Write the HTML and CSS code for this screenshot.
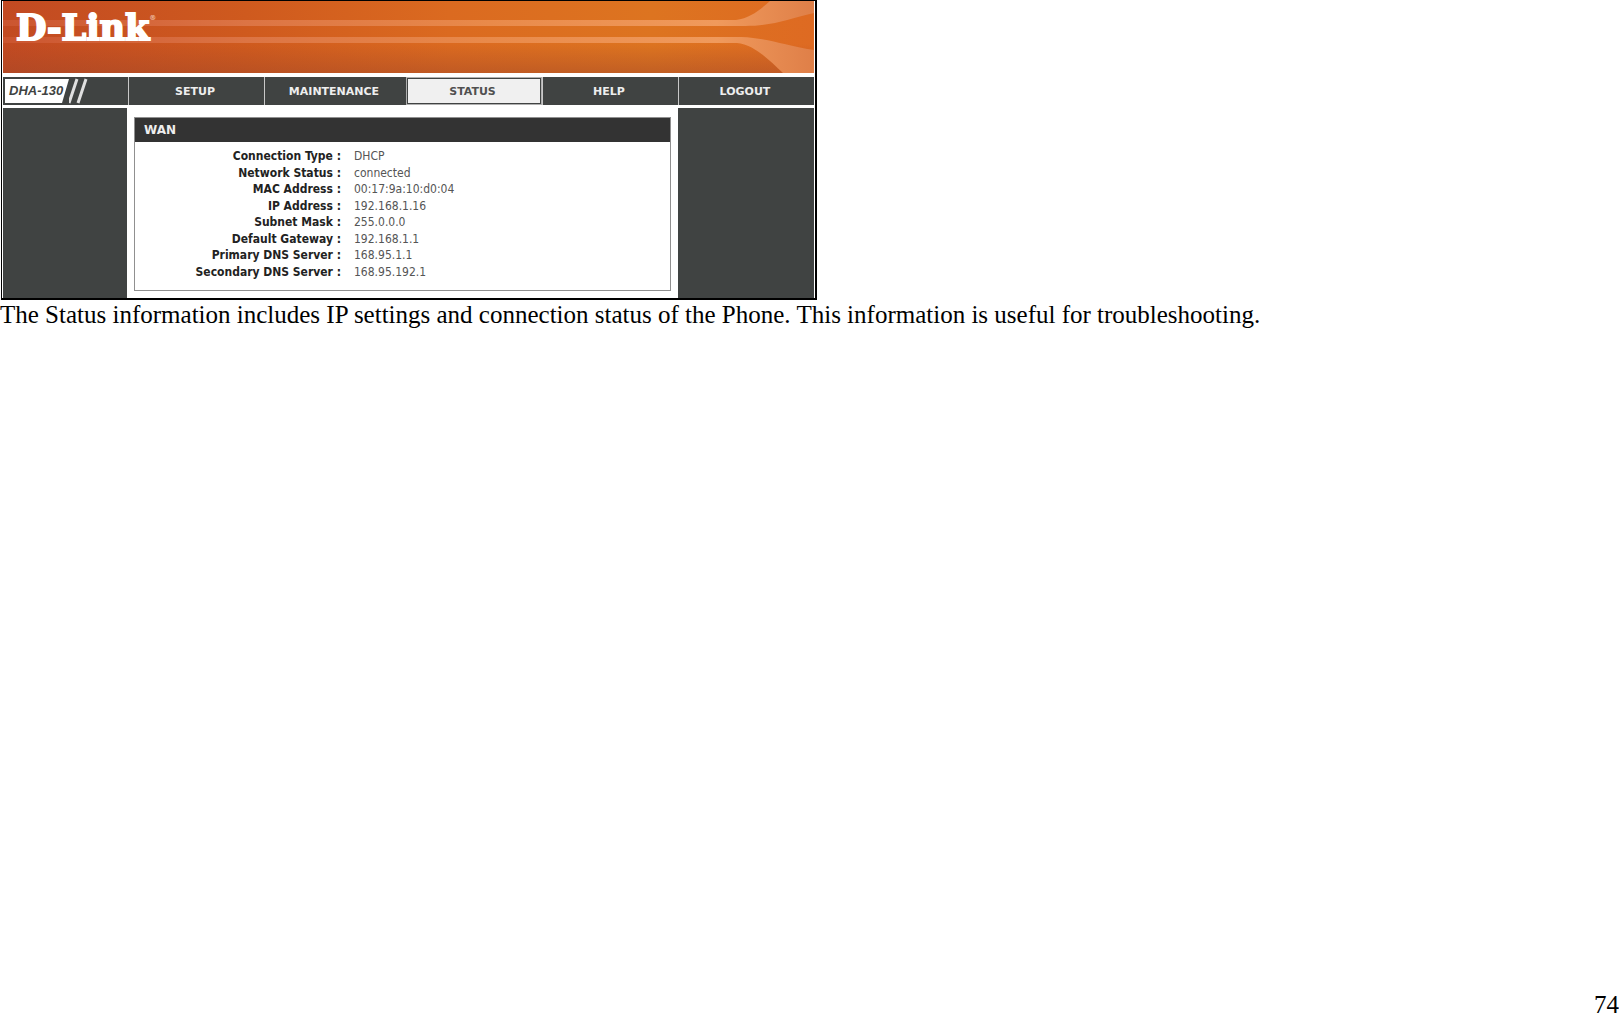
FILE: index.html
```html
<!DOCTYPE html>
<html lang="en">
<head>
  <meta charset="UTF-8">
  <meta name="viewport" content="width=device-width, initial-scale=1.0">
  <title>D-Link DHA-130 Status</title>
  <link rel="stylesheet" href="styles.css">
</head>
<body>

  <main>
    <div class="router">
      <header class="banner">
        <svg class="banner-art" viewBox="0 0 811 72" preserveAspectRatio="none" aria-hidden="true">
          <defs>
            <linearGradient id="streak" x1="0" y1="0" x2="811" y2="0" gradientUnits="userSpaceOnUse">
              <stop offset="0" stop-color="#cb5530"/>
              <stop offset="0.3" stop-color="#dc7444"/>
              <stop offset="0.6" stop-color="#e98a4a"/>
              <stop offset="0.88" stop-color="#f09a5c"/>
              <stop offset="1" stop-color="#df7f48"/>
            </linearGradient>
          </defs>
          <path fill="url(#streak)" d="M0 19H733C747 17 757 9 767 0H811V12C785 18 770 25 742 25H0z"/>
          <path fill="url(#streak)" d="M0 36H738C765 37 780 44 811 49V72H780C766 59 752 44 734 42H0z"/>
        </svg>
        <div class="logo">D-Link<sup>®</sup></div>
      </header>

      <nav class="menu">
        <div class="model">
          <span class="model-name">DHA-130</span>
          <svg class="slashes" width="24" height="28" viewBox="0 0 24 28" aria-hidden="true">
            <path d="M8 2L0 26M17 2L9 26" stroke="#e0e0e0" stroke-width="3" fill="none"/>
          </svg>
        </div>
        <a href="#">SETUP</a>
        <a href="#">MAINTENANCE</a>
        <a href="#" class="active">STATUS</a>
        <a href="#">HELP</a>
        <a href="#">LOGOUT</a>
      </nav>

      <div class="content">
        <div class="side"></div>
        <section class="box">
          <h2>WAN</h2>
          <table>
            <tr><th scope="row">Connection Type :</th><td>DHCP</td></tr>
            <tr><th scope="row">Network Status :</th><td>connected</td></tr>
            <tr><th scope="row">MAC Address :</th><td>00:17:9a:10:d0:04</td></tr>
            <tr><th scope="row">IP Address :</th><td>192.168.1.16</td></tr>
            <tr><th scope="row">Subnet Mask :</th><td>255.0.0.0</td></tr>
            <tr><th scope="row">Default Gateway :</th><td>192.168.1.1</td></tr>
            <tr><th scope="row">Primary DNS Server :</th><td>168.95.1.1</td></tr>
            <tr><th scope="row">Secondary DNS Server :</th><td>168.95.192.1</td></tr>
          </table>
        </section>
        <div class="side"></div>
      </div>
    </div>

    <p class="note">The Status information includes IP settings and connection status of the Phone. This information is useful for troubleshooting.</p>
  </main>

  <footer>74</footer>

</body>
</html>
```
FILE: styles.css
```css
* {
  box-sizing: border-box;
}
body {
  display: flex;
  flex-direction: column;
  min-height: 100vh;
  margin: 0;
  background-color: #fff;
  color: #000;
  font-family: "Liberation Serif", "Times New Roman", serif;
  font-size: 25px;
  overflow: hidden;
}
main {
  flex: 1;
}

/* Router page */
.router {
  max-width: 816px;
  margin-left: 1px;
  padding: 0 1px;
  border: solid #000;
  border-width: 1px 2px 2px 1px;
  font-family: "DejaVu Sans Condensed", "DejaVu Sans", sans-serif;
  font-size: 12px;
}
.banner {
  position: relative;
  height: 72px;
  padding: 5px 13px;
  background:
    linear-gradient(to bottom, rgba(160, 70, 40, 0) 60%, rgba(160, 70, 40, 0.45)),
    linear-gradient(to right, #c24a22, #cf5a1e 30%, #db6a20 55%, #dd7420 80%, #de6a22);
}
.banner-art {
  position: absolute;
  top: 0;
  left: 0;
  width: 100%;
  height: 100%;
}
.logo {
  position: relative;
  color: #fff;
  font-family: "DejaVu Serif", serif;
  font-size: 35px;
  font-weight: bold;
  line-height: 44px;
  -webkit-text-stroke: 2px #fff;
}
.logo sup {
  font-size: 7px;
  line-height: 1;
  vertical-align: 20px;
  -webkit-text-stroke: 0;
  color: #f0c0a8;
}

/* Menu */
.menu {
  display: grid;
  grid-template-columns: 125fr 136fr 142fr 136fr 136fr 136fr;
  height: 28px;
  margin-top: 4px;
  background-color: #404342;
}
.menu a {
  display: flex;
  align-items: center;
  justify-content: center;
  padding-right: 3px;
  border-left: 1px solid #c8c8c8;
  color: #eee;
  font-family: "DejaVu Sans", sans-serif;
  font-size: 11px;
  font-weight: bold;
  text-decoration: none;
}
.menu .active {
  border: 2px solid #404342;
  outline: 1px solid #b0b0b0;
  outline-offset: -1px;
  background-color: #f0f0f0;
  color: #505050;
}
.model {
  display: flex;
  align-items: center;
}
.model-name {
  width: 64px;
  height: 24px;
  margin-left: 2px;
  padding-left: 4px;
  background-color: #fff;
  clip-path: polygon(0 0, 100% 0, 57px 100%, 0 100%);
  color: #404342;
  font-family: "Liberation Sans", Arial, sans-serif;
  font-size: 13px;
  font-style: italic;
  font-weight: bold;
  line-height: 24px;
}

/* Content */
.content {
  display: grid;
  grid-template-columns: 124fr 551fr 136fr;
  margin-top: 3px;
}
.side {
  background-color: #404342;
}
.box {
  margin: 9px 7px 7px;
  border: 1px solid #909090;
}
.box h2 {
  margin: 0;
  padding-left: 9px;
  background-color: #333;
  color: #eee;
  font-family: "DejaVu Sans", sans-serif;
  font-size: 12px;
  line-height: 24px;
}
.box table {
  width: 100%;
  height: 132px;
  margin: 6px 0 10px;
  border-collapse: collapse;
}
.box th,
.box td {
  padding: 0;
  line-height: 16px;
}
.box th {
  width: 206px;
  color: #222;
  font-size: 12px;
  text-align: right;
}
.box td {
  padding-left: 13px;
  color: #555;
}

.note {
  margin: 0;
  line-height: 30px;
}
footer {
  line-height: 16px;
  text-align: right;
}
```
